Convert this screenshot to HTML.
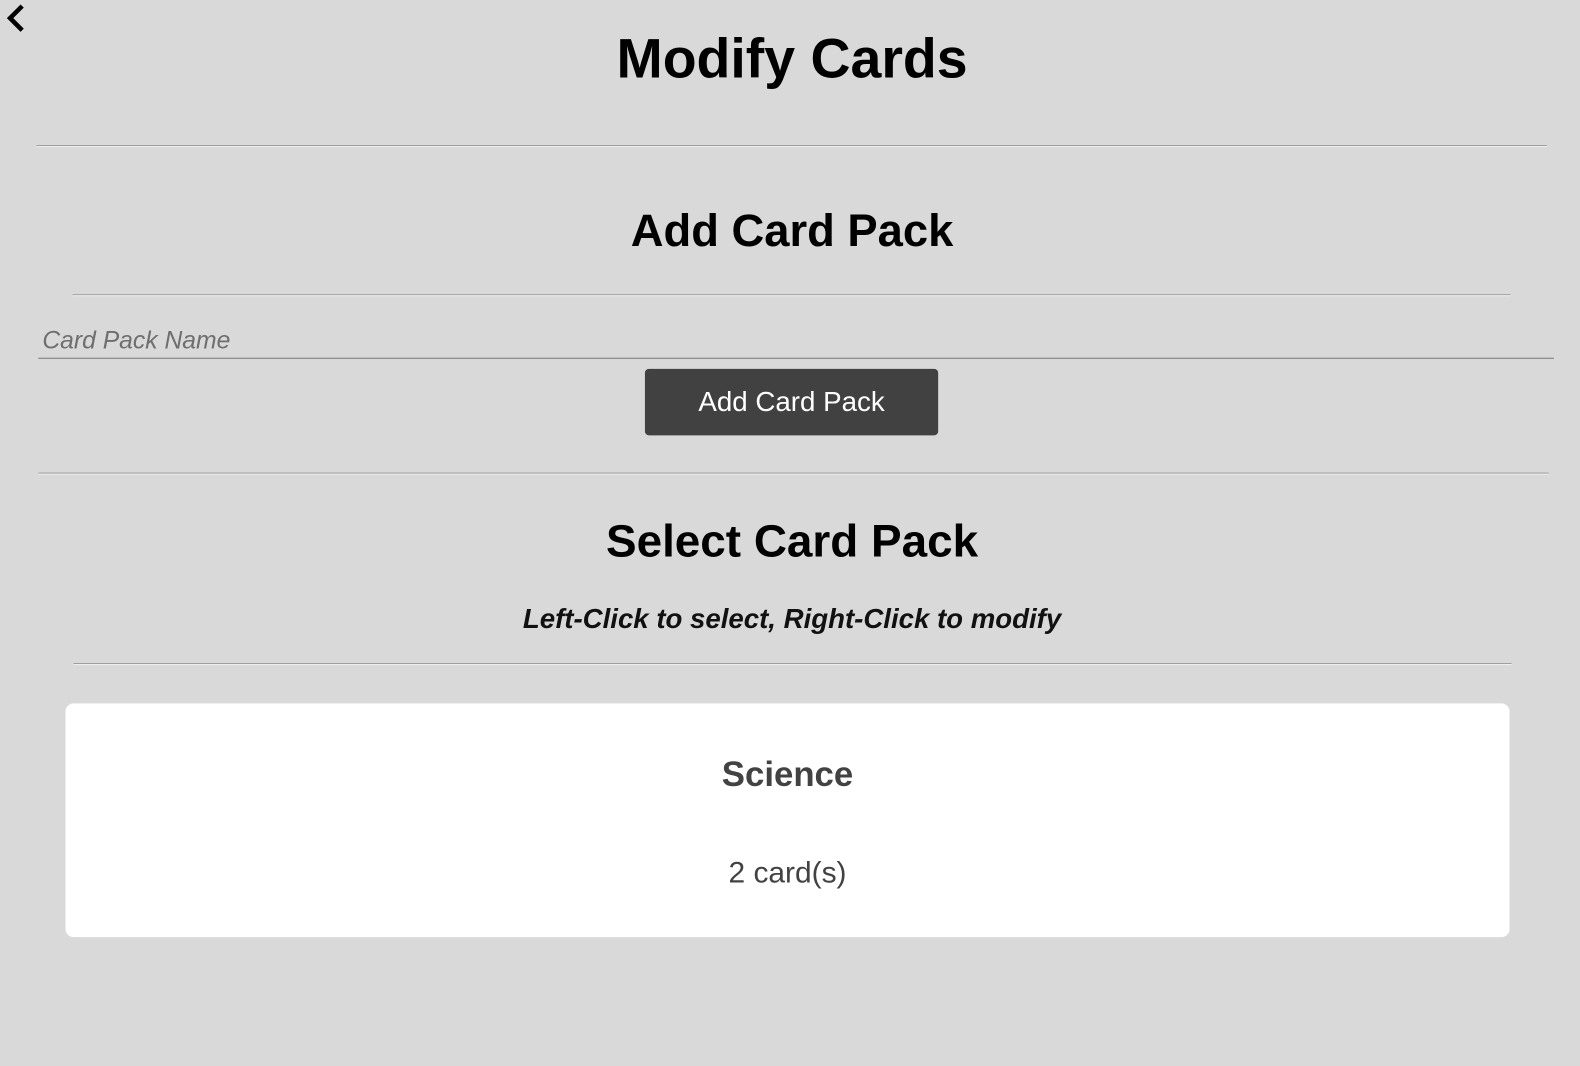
<!DOCTYPE html>
<html><head><meta charset="utf-8"><style>
html,body{margin:0;padding:0;width:1580px;height:1066px;background:#d9d9d9;overflow:hidden;font-family:"Liberation Sans",Arial,sans-serif;}
#w{position:absolute;left:0;top:0;width:1568px;height:1058px;transform:scale(1.0077);transform-origin:0 0;}
.a{position:absolute;white-space:nowrap;}
.c{left:0;width:1572px;text-align:center;}
.hr{position:absolute;height:0;border-top:1px solid #9a9a9a;border-bottom:1px solid #f0f0f0;}
</style></head><body><div id="w">
<svg class="a" style="left:4px;top:4px" width="22" height="30" viewBox="0 0 22 30"><path d="M18 2 L6 14 L18 26" fill="none" stroke="#000" stroke-width="4.5"/></svg>
<div class="a c" style="top:26px;font-size:55px;font-weight:bold;line-height:64px;">Modify Cards</div>
<div class="hr" style="left:36px;width:1499px;top:144px"></div>
<div class="a c" style="top:202px;font-size:45px;font-weight:bold;line-height:54px;">Add Card Pack</div>
<div class="hr" style="left:72px;width:1427px;top:292px"></div>
<div class="a" style="left:42px;top:324px;font-size:24.5px;font-style:italic;color:#6e6e6e;line-height:30px;">Card Pack Name</div>
<div class="a" style="left:38px;width:1504px;top:355px;border-top:1px solid #777;"></div>
<div class="a" style="left:640px;top:366px;width:291px;height:66px;background:#414141;border-radius:4px;color:#fff;font-size:27.5px;text-align:center;line-height:66px;">Add Card Pack</div>
<div class="hr" style="left:38px;width:1499px;top:469px"></div>
<div class="a c" style="top:510px;font-size:45.5px;font-weight:bold;line-height:54px;">Select Card Pack</div>
<div class="a c" style="top:598px;font-size:27.4px;font-weight:bold;font-style:italic;line-height:32px;color:#111;">Left-Click to select, Right-Click to modify</div>
<div class="hr" style="left:73px;width:1427px;top:658px"></div>
<div class="a" style="left:65px;top:698px;width:1433px;height:232px;background:#fff;border-radius:8px;"></div>
<div class="a" style="left:65px;width:1433px;text-align:center;top:747px;font-size:34.5px;font-weight:bold;color:#424242;line-height:44px;">Science</div>
<div class="a" style="left:65px;width:1433px;text-align:center;top:849px;font-size:29.7px;color:#424242;line-height:36px;">2 card(s)</div>
</div></body></html>
